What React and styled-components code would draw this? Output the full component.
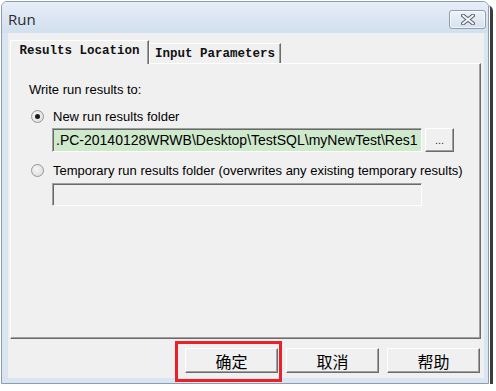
import React from 'react';
import styled, { createGlobalStyle } from 'styled-components';

const GlobalStyle = createGlobalStyle`
  html, body { margin: 0; padding: 0; background: #fff; }
  body { font-family: "Liberation Sans", Arial, sans-serif; }
`;

const Window = styled.div`
  position: relative;
  margin: 1px 0 0 1px;
  width: 488px;
  height: 383px;
  box-sizing: border-box;
  border: 1px solid #8f9cab;
  border-radius: 6px 6px 0 0;
  background: #dae5f2;
  box-shadow: 1px 1px 0 #fff, 4px 4px 0 #3c3c3c;
  display: flex;
  flex-direction: column;
`;

const TitleBar = styled.div`
  height: 31px;
  flex: none;
  display: flex;
  align-items: center;
  justify-content: space-between;
  padding: 0 2px 0 6px;
  border-radius: 5px 5px 0 0;
  background: linear-gradient(#e6eef8, #d2dfee);
`;

const Title = styled.span`
  font-family: "Open Sans", "Noto Sans", sans-serif;
  font-size: 15px;
  color: #2b2b2b;
  margin-top: 2px;
`;

const CloseButton = styled.div`
  width: 37px;
  height: 19px;
  margin-top: 4px;
  box-sizing: border-box;
  border: 1px solid #8d9db2;
  border-radius: 3px;
  background: linear-gradient(#eef3f9, #d6e0ec);
  box-shadow: inset 0 0 0 1px rgba(255,255,255,0.7);
  display: flex;
  align-items: center;
  justify-content: center;
`;

const Frame = styled.div`
  flex: 1;
  display: flex;
  padding: 0 4px 5px 6px;
`;

const Client = styled.div`
  flex: 1;
  background: #f0f0f0;
  display: flex;
  flex-direction: column;
  padding: 7px 3px 0 2px;
`;

const TabRow = styled.div`
  height: 23px;
  display: flex;
  align-items: flex-end;
  position: relative;
  z-index: 1;
`;

const Tab = styled.div`
  box-sizing: border-box;
  width: ${p => (p.$active ? 139 : 132)}px;
  height: ${p => (p.$active ? 24 : 20)}px;
  margin-bottom: ${p => (p.$active ? -1 : 0)}px;
  background: #f0f0f0;
  border-top: 1px solid #fff;
  border-left: 1px solid #fff;
  border-right: 1px solid #6b6b6b;
  box-shadow: inset -1px 0 0 #a0a0a0;
  font-family: "Liberation Mono", "DejaVu Sans Mono", monospace;
  font-size: 12.5px;
  font-weight: bold;
  color: #111;
  display: flex;
  align-items: center;
  justify-content: center;
  padding-bottom: ${p => (p.$active ? 3 : 0)}px;
`;

const Panel = styled.div`
  height: 276px;
  box-sizing: border-box;
  border-top: 1px solid #fff;
  border-left: 1px solid #fff;
  border-right: 1px solid #6b6b6b;
  border-bottom: 1px solid #6b6b6b;
  box-shadow: inset -1px -1px 0 #a0a0a0;
  padding: 18px 0 0 18px;
  font-size: 13px;
  color: #000;
`;

const Line = styled.div`
  height: 16px;
  line-height: 16px;
  margin-top: ${p => p.$gap || 0}px;
  white-space: nowrap;
`;

const RadioRow = styled.div`
  display: flex;
  align-items: center;
  height: 16px;
  margin-top: ${p => p.$gap || 0}px;
  white-space: nowrap;
`;

const Radio = styled.span`
  width: 13px;
  height: 13px;
  box-sizing: border-box;
  margin: 0 9px 0 2px;
  border-radius: 50%;
  border: 1px solid #969696;
  background: radial-gradient(circle at 40% 40%, #f6f6f6, #d8d8d8);
  display: flex;
  align-items: center;
  justify-content: center;
  &::after {
    content: '';
    display: ${p => (p.$checked ? 'block' : 'none')};
    width: 5px;
    height: 5px;
    border-radius: 50%;
    background: #1a1a1a;
  }
`;

const FieldRow = styled.div`
  display: flex;
  gap: 3px;
  margin: ${p => p.$gap || 0}px 0 0 23px;
`;

const TextField = styled.div`
  width: 370px;
  height: ${p => p.$h || 24}px;
  box-sizing: border-box;
  background: ${p => p.$bg || '#f0f0f0'};
  border-top: 1px solid #a0a0a0;
  border-left: 1px solid #a0a0a0;
  border-right: 1px solid #fff;
  border-bottom: 1px solid #fff;
  box-shadow: inset 1px 1px 0 #696969;
  padding: 0 0 0 3px;
  font-size: 14px;
  line-height: 22px;
  white-space: nowrap;
  overflow: hidden;
`;

const SmallButton = styled.div`
  width: 29px;
  height: 24px;
  box-sizing: border-box;
  background: #f0f0f0;
  border-top: 1px solid #fff;
  border-left: 1px solid #fff;
  border-right: 1px solid #6b6b6b;
  border-bottom: 1px solid #6b6b6b;
  box-shadow: inset -1px -1px 0 #a0a0a0;
  text-align: center;
  line-height: 22px;
  font-size: 11px;
  color: #333;
`;

const ButtonRow = styled.div`
  display: flex;
  justify-content: flex-end;
  gap: 8px;
  margin-top: 9px;
  padding-right: 1px;
`;

const Button = styled.div`
  position: relative;
  width: 93px;
  height: 25px;
  box-sizing: border-box;
  background: #f0f0f0;
  border-top: 1px solid #fff;
  border-left: 1px solid #fff;
  border-right: 1px solid #6b6b6b;
  border-bottom: 1px solid #6b6b6b;
  box-shadow: inset -1px -1px 0 #a0a0a0;
  font-family: "Noto Sans CJK SC", "Liberation Sans", sans-serif;
  font-size: 16px;
  color: #000;
  display: flex;
  align-items: center;
  justify-content: center;
`;

const Highlight = styled.div`
  position: absolute;
  left: -11px;
  top: -8px;
  right: -5px;
  bottom: -10px;
  border: 3px solid #ea2129;
  pointer-events: none;
`;

const CloseIcon = () => (
  <svg width="14" height="11" viewBox="0 0 14 11">
    <path d="M2 1.5 L12 9.5 M12 1.5 L2 9.5" stroke="#5b6472" strokeWidth="4" strokeLinecap="round" />
    <path d="M2 1.5 L12 9.5 M12 1.5 L2 9.5" stroke="#f4f6f9" strokeWidth="2" strokeLinecap="round" />
  </svg>
);

export default function App() {
  return (
    <>
      <GlobalStyle />
      <Window>
        <TitleBar>
          <Title>Run</Title>
          <CloseButton><CloseIcon /></CloseButton>
        </TitleBar>
        <Frame>
          <Client>
            <TabRow>
              <Tab $active>Results Location</Tab>
              <Tab>Input Parameters</Tab>
            </TabRow>
            <Panel>
              <Line>Write run results to:</Line>
              <RadioRow $gap={10}>
                <Radio $checked />
                New run results folder
              </RadioRow>
              <FieldRow $gap={4}>
                <TextField $bg="#cfe9cd">.PC-20140128WRWB\Desktop\TestSQL\myNewTest\Res1</TextField>
                <SmallButton>...</SmallButton>
              </FieldRow>
              <RadioRow $gap={10}>
                <Radio />
                Temporary run results folder (overwrites any existing temporary results)
              </RadioRow>
              <FieldRow $gap={5}>
                <TextField $h={23} />
              </FieldRow>
            </Panel>
            <ButtonRow>
              <Button>确定<Highlight /></Button>
              <Button>取消</Button>
              <Button>帮助</Button>
            </ButtonRow>
          </Client>
        </Frame>
      </Window>
    </>
  );
}
